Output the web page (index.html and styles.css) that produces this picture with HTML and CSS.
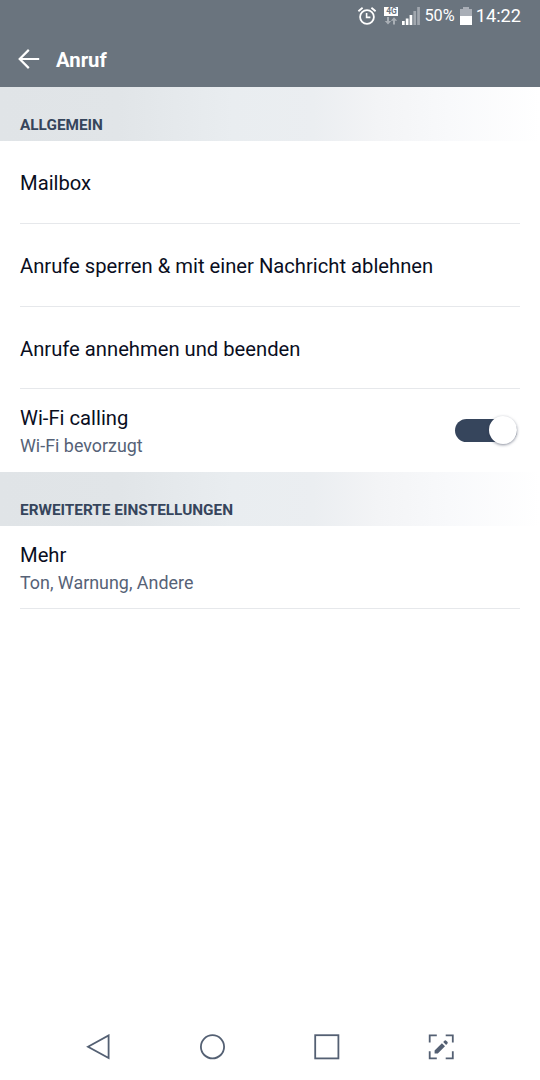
FILE: index.html
```html
<!DOCTYPE html>
<html lang="de">
<head>
    <meta charset="UTF-8">
    <meta name="viewport" content="width=device-width, initial-scale=1.0">
    <title>Anruf</title>
    <link rel="stylesheet" href="styles.css">
</head>
<body>
    <div class="screen">
        <div class="status-bar">
            <svg class="alarm" width="20" height="20" viewBox="0 0 20 20" fill="none" stroke="#fff">
                <circle cx="10" cy="11" r="6.9" stroke-width="1.8"/>
                <path d="M1.4 5.3L5.6 1.7M18.6 5.3L14.4 1.7" stroke-width="1.8"/>
                <path d="M9.6 7V11.4H13.4" stroke-width="1.6"/>
            </svg>
            <div class="network">
                <span class="network-type">4G</span>
                <svg width="14" height="8" viewBox="0 0 14 8" fill="#a9afb5">
                    <path d="M3 0H5V4H7.2L4 7.6L0.8 4H3ZM9 7.6H11V3.8H13.2L10 0.2L6.8 3.8H9Z"/>
                </svg>
            </div>
            <svg class="signal" width="18" height="18" viewBox="0 0 18 18">
                <path d="M0 14H2.7V18H0ZM3.8 11.5H6.5V18H3.8ZM7.6 8H10.3V18H7.6Z" fill="#fff"/>
                <path d="M11.4 4H14.1V18H11.4ZM15.2 0H17.9V18H15.2Z" fill="#a1a7ae"/>
            </svg>
            <span class="percent">50%</span>
            <svg class="battery" width="12" height="18" viewBox="0 0 12 18">
                <path d="M3 0H9V2H12V9H0V2H3Z" fill="#a9aeb6"/>
                <path d="M0 9H12V18H0Z" fill="#fff"/>
            </svg>
            <span class="clock">14:22</span>
        </div>

        <div class="header">
            <svg class="back" width="22" height="20" viewBox="0 0 22 20" fill="none" stroke="#fff" stroke-width="2.2">
                <path d="M10.8 0.9L1.7 10L10.8 19.1M1.7 10H21.2"/>
            </svg>
            <h1>Anruf</h1>
        </div>

        <h2 class="section-title">ALLGEMEIN</h2>
        <div class="list">
            <div class="row"><div class="title">Mailbox</div></div>
            <div class="row"><div class="title">Anrufe sperren &amp; mit einer Nachricht ablehnen</div></div>
            <div class="row"><div class="title">Anrufe annehmen und beenden</div></div>
            <div class="row last">
                <div>
                    <div class="title">Wi-Fi calling</div>
                    <div class="summary">Wi-Fi bevorzugt</div>
                </div>
                <div class="switch"><div class="knob"></div></div>
            </div>
        </div>

        <h2 class="section-title">ERWEITERTE EINSTELLUNGEN</h2>
        <div class="list">
            <div class="row">
                <div>
                    <div class="title">Mehr</div>
                    <div class="summary">Ton, Warnung, Andere</div>
                </div>
            </div>
        </div>

        <div class="nav-bar">
            <svg width="26" height="26" viewBox="0 0 26 26">
                <path d="M2 12.7L22.6 1.4V24Z"/>
            </svg>
            <svg width="26" height="26" viewBox="0 0 26 26">
                <circle cx="12.5" cy="12.8" r="11.6"/>
            </svg>
            <svg width="26" height="26" viewBox="0 0 26 26">
                <rect x="1.2" y="1.2" width="23.2" height="23.2"/>
            </svg>
            <svg width="26" height="26" viewBox="0 0 26 26">
                <path d="M1.7 8.5V1.4H8.8M17.7 1.4H24.8V8.5M24.8 17.3V24.4H17.7M8.8 24.4H1.7V17.3"/>
                <path class="pencil" d="M6.6 19.6V16.4L13.9 9.2L17 12.3L9.8 19.6ZM15.2 8L16.7 6.6Q17.6 6 18.5 6.9L19.4 7.8Q20.2 8.7 19.5 9.5L18.1 11Z"/>
            </svg>
        </div>
    </div>
</body>
</html>
```
FILE: styles.css
```css
body {
    margin: 0;
    font-family: Roboto, "Liberation Sans", sans-serif;
    background-color: #fff;
}
.screen {
    display: flex;
    flex-direction: column;
    width: 540px;
    height: 1080px;
    overflow: hidden;
}
.status-bar {
    display: flex;
    align-items: center;
    justify-content: flex-end;
    box-sizing: border-box;
    height: 31px;
    padding-right: 19px;
    color: #fff;
    background-color: #6a747e;
}
.alarm {
    margin-right: 7px;
}
.network {
    display: flex;
    flex-direction: column;
    align-items: center;
    gap: 1px;
    margin-right: 4px;
}
.network-type {
    width: 14px;
    height: 9px;
    font-size: 8.5px;
    line-height: 9.5px;
    font-weight: bold;
    text-align: center;
    color: #6a747e;
    background-color: #fff;
}
.signal {
    margin-right: 4px;
}
.percent {
    margin-right: 5px;
    font-size: 16.3px;
}
.battery {
    margin-right: 4px;
}
.clock {
    font-size: 18.2px;
}
.header {
    display: flex;
    align-items: center;
    box-sizing: border-box;
    height: 56px;
    padding: 1px 0 0 18px;
    color: #fff;
    background-color: #6a747e;
}
.back {
    margin: 0 16px 2px 0;
}
h1 {
    margin: 0;
    font-size: 20.3px;
    font-weight: bold;
}
.section-title {
    box-sizing: border-box;
    height: 54px;
    margin: 0;
    padding: 28px 20px 0;
    font-size: 15.35px;
    line-height: 20px;
    font-weight: bold;
    color: #36455c;
    background: linear-gradient(to right, #e0e4e7 0%, #e1e5e8 22%, #e9edf0 43%, #ebeef1 58%, #f3f4f6 70%, #f8f9fb 83%, #fff 100%);
}
.list {
    padding: 0 20px;
}
.row {
    display: flex;
    align-items: center;
    justify-content: space-between;
    box-sizing: border-box;
    height: 82.75px;
    padding-top: 3px;
    border-bottom: 1px solid #e6e8eb;
}
.row.last {
    padding-top: 1px;
    border-bottom: none;
}
.title {
    font-size: 20.22px;
    line-height: 28px;
    color: #0a0e1e;
}
.summary {
    margin-bottom: -1px;
    padding-top: 1px;
    font-size: 17.9px;
    line-height: 26px;
    color: #566277;
}
.switch {
    display: flex;
    justify-content: flex-end;
    align-items: center;
    width: 61.5px;
    height: 23px;
    margin: 0 3.5px 2px 0;
    border-radius: 12px;
    background-color: #36455c;
}
.knob {
    width: 28px;
    height: 28px;
    border-radius: 50%;
    background-color: #fff;
    box-shadow: 0 1px 3px rgba(40, 50, 75, 0.55);
}
.nav-bar {
    display: flex;
    align-items: center;
    justify-content: space-between;
    box-sizing: border-box;
    height: 67px;
    margin-top: auto;
    padding: 0 86px;
}
.nav-bar svg {
    fill: none;
    stroke: #546073;
    stroke-width: 1.8;
}
.nav-bar .pencil {
    fill: #546073;
    stroke: none;
}
```
